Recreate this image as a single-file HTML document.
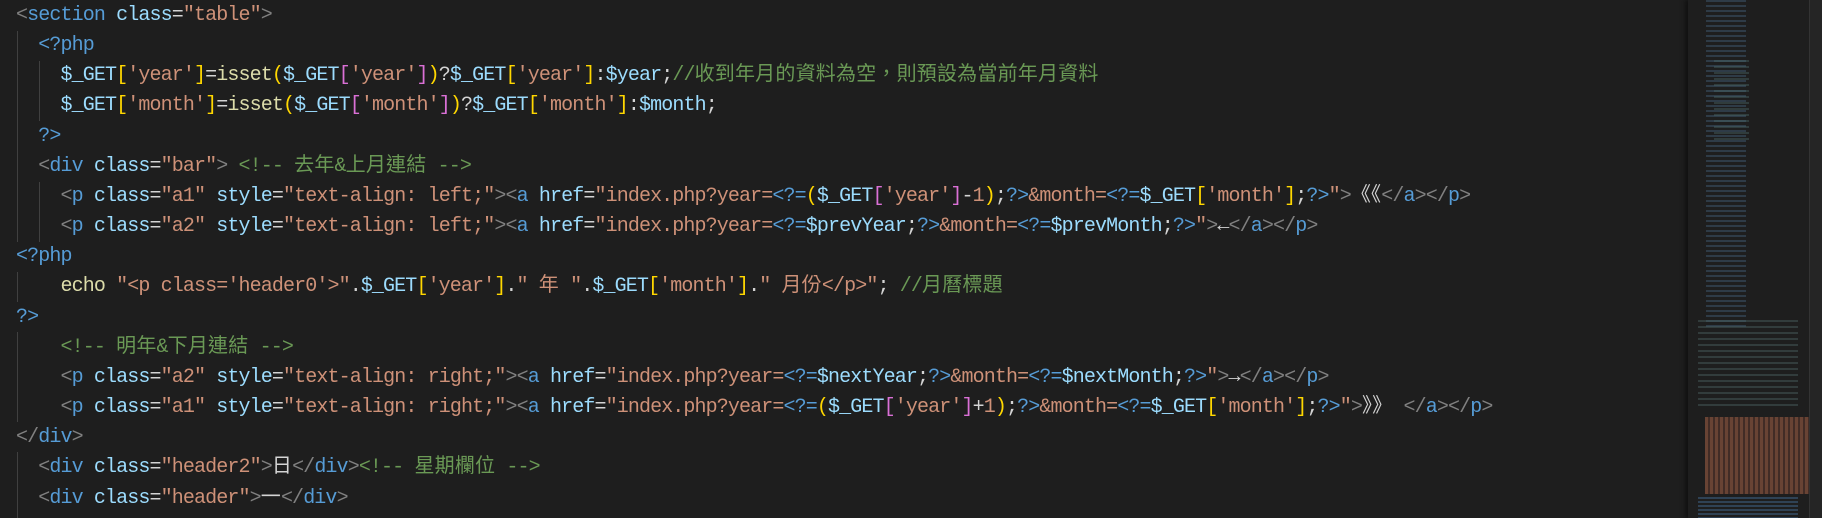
<!DOCTYPE html>
<html><head><meta charset="utf-8"><style>
html,body{margin:0;padding:0;background:#1e1e1e;width:1822px;height:518px;overflow:hidden;position:relative}
pre{position:absolute;left:16px;top:1px;margin:0;font-family:"Liberation Mono","Noto Sans CJK TC",monospace;font-size:20px;letter-spacing:-0.88px;line-height:30.15px;color:#d4d4d4;white-space:pre}
.g{color:#808080}.t{color:#569cd6}.a{color:#9cdcfe}.s{color:#ce9178}.v{color:#9cdcfe}.y{color:#ffd700}.p{color:#da70d6}.f{color:#dcdcaa}.c{color:#6a9955}.e{color:#c586c0}
.j{letter-spacing:0.2px;font-family:"Noto Sans CJK TC",sans-serif;line-height:0;font-size:20px}
.ig{position:absolute;width:1px;background:#404040}
#mm{position:absolute;left:1688px;top:0;width:121px;height:518px;background:#1e1e1e;box-shadow:-3px 0 4px #111}
#sb{position:absolute;left:1809px;top:0;width:13px;height:518px;background:#252525;border-left:1px solid #333}
</style></head><body>
<div class="ig" style="left:17px;top:31px;height:211px"></div>
<div class="ig" style="left:39px;top:61px;height:60px"></div>
<div class="ig" style="left:39px;top:182px;height:60px"></div>
<div class="ig" style="left:17px;top:272px;height:30px"></div>
<div class="ig" style="left:17px;top:332px;height:90px"></div>
<div class="ig" style="left:17px;top:452px;height:66px"></div>
<pre><span class="g">&lt;</span><span class="t">section</span> <span class="a">class</span>=<span class="s">"table"</span><span class="g">&gt;</span>
  <span class="t">&lt;?php</span>
    <span class="v">$_GET</span><span class="y">[</span><span class="s">'year'</span><span class="y">]</span>=<span class="f">isset</span><span class="y">(</span><span class="v">$_GET</span><span class="p">[</span><span class="s">'year'</span><span class="p">]</span><span class="y">)</span>?<span class="v">$_GET</span><span class="y">[</span><span class="s">'year'</span><span class="y">]</span>:<span class="v">$year</span>;<span class="c">//<span class="j">收到年月的資料為空，則預設為當前年月資料</span></span>
    <span class="v">$_GET</span><span class="y">[</span><span class="s">'month'</span><span class="y">]</span>=<span class="f">isset</span><span class="y">(</span><span class="v">$_GET</span><span class="p">[</span><span class="s">'month'</span><span class="p">]</span><span class="y">)</span>?<span class="v">$_GET</span><span class="y">[</span><span class="s">'month'</span><span class="y">]</span>:<span class="v">$month</span>;
  <span class="t">?&gt;</span>
  <span class="g">&lt;</span><span class="t">div</span> <span class="a">class</span>=<span class="s">"bar"</span><span class="g">&gt;</span> <span class="c">&lt;!-- <span class="j">去年</span>&amp;<span class="j">上月連結</span> --&gt;</span>
    <span class="g">&lt;</span><span class="t">p</span> <span class="a">class</span>=<span class="s">"a1"</span> <span class="a">style</span>=<span class="s">"text-align: left;"</span><span class="g">&gt;&lt;</span><span class="t">a</span> <span class="a">href</span>=<span class="s">"index.php?year=</span><span class="t">&lt;?=</span><span class="y">(</span><span class="v">$_GET</span><span class="p">[</span><span class="s">'year'</span><span class="p">]</span>-<span class="s">1</span><span class="y">)</span>;<span class="t">?&gt;</span><span class="s">&amp;month=</span><span class="t">&lt;?=</span><span class="v">$_GET</span><span class="y">[</span><span class="s">'month'</span><span class="y">]</span>;<span class="t">?&gt;</span><span class="s">"</span><span class="g">&gt;</span><span class="j">《《</span><span class="g">&lt;/</span><span class="t">a</span><span class="g">&gt;&lt;/</span><span class="t">p</span><span class="g">&gt;</span>
    <span class="g">&lt;</span><span class="t">p</span> <span class="a">class</span>=<span class="s">"a2"</span> <span class="a">style</span>=<span class="s">"text-align: left;"</span><span class="g">&gt;&lt;</span><span class="t">a</span> <span class="a">href</span>=<span class="s">"index.php?year=</span><span class="t">&lt;?=</span><span class="v">$prevYear</span>;<span class="t">?&gt;</span><span class="s">&amp;month=</span><span class="t">&lt;?=</span><span class="v">$prevMonth</span>;<span class="t">?&gt;</span><span class="s">"</span><span class="g">&gt;</span>←<span class="g">&lt;/</span><span class="t">a</span><span class="g">&gt;&lt;/</span><span class="t">p</span><span class="g">&gt;</span>
<span class="t">&lt;?php</span>
    <span class="f">echo</span> <span class="s">"&lt;p class='header0'&gt;"</span>.<span class="v">$_GET</span><span class="y">[</span><span class="s">'year'</span><span class="y">]</span>.<span class="s">" <span class="j">年</span> "</span>.<span class="v">$_GET</span><span class="y">[</span><span class="s">'month'</span><span class="y">]</span>.<span class="s">" <span class="j">月份</span>&lt;/p&gt;"</span>; <span class="c">//<span class="j">月曆標題</span></span>
<span class="t">?&gt;</span>
    <span class="c">&lt;!-- <span class="j">明年</span>&amp;<span class="j">下月連結</span> --&gt;</span>
    <span class="g">&lt;</span><span class="t">p</span> <span class="a">class</span>=<span class="s">"a2"</span> <span class="a">style</span>=<span class="s">"text-align: right;"</span><span class="g">&gt;&lt;</span><span class="t">a</span> <span class="a">href</span>=<span class="s">"index.php?year=</span><span class="t">&lt;?=</span><span class="v">$nextYear</span>;<span class="t">?&gt;</span><span class="s">&amp;month=</span><span class="t">&lt;?=</span><span class="v">$nextMonth</span>;<span class="t">?&gt;</span><span class="s">"</span><span class="g">&gt;</span>→<span class="g">&lt;/</span><span class="t">a</span><span class="g">&gt;&lt;/</span><span class="t">p</span><span class="g">&gt;</span>
    <span class="g">&lt;</span><span class="t">p</span> <span class="a">class</span>=<span class="s">"a1"</span> <span class="a">style</span>=<span class="s">"text-align: right;"</span><span class="g">&gt;&lt;</span><span class="t">a</span> <span class="a">href</span>=<span class="s">"index.php?year=</span><span class="t">&lt;?=</span><span class="y">(</span><span class="v">$_GET</span><span class="p">[</span><span class="s">'year'</span><span class="p">]</span>+<span class="s">1</span><span class="y">)</span>;<span class="t">?&gt;</span><span class="s">&amp;month=</span><span class="t">&lt;?=</span><span class="v">$_GET</span><span class="y">[</span><span class="s">'month'</span><span class="y">]</span>;<span class="t">?&gt;</span><span class="s">"</span><span class="g">&gt;</span><span class="j">》》</span> <span class="g">&lt;/</span><span class="t">a</span><span class="g">&gt;&lt;/</span><span class="t">p</span><span class="g">&gt;</span>
<span class="g">&lt;/</span><span class="t">div</span><span class="g">&gt;</span>
  <span class="g">&lt;</span><span class="t">div</span> <span class="a">class</span>=<span class="s">"header2"</span><span class="g">&gt;</span><span class="j">日</span><span class="g">&lt;/</span><span class="t">div</span><span class="g">&gt;</span><span class="c">&lt;!-- <span class="j">星期欄位</span> --&gt;</span>
  <span class="g">&lt;</span><span class="t">div</span> <span class="a">class</span>=<span class="s">"header"</span><span class="g">&gt;</span><span class="j">一</span><span class="g">&lt;/</span><span class="t">div</span><span class="g">&gt;</span>
  <span class="g">&lt;</span><span class="t">div</span> <span class="a">class</span>=<span class="s">"header"</span><span class="g">&gt;</span><span class="j">二</span><span class="g">&lt;/</span><span class="t">div</span><span class="g">&gt;</span></pre>
<div id="mm">
<div style="position:absolute;left:18px;top:0;width:40px;height:330px;background:repeating-linear-gradient(#3f5870 0 2px,transparent 2px 5px);opacity:.5"></div>
<div style="position:absolute;left:26px;top:60px;width:35px;height:80px;background:repeating-linear-gradient(#4a6a6a 0 2px,transparent 2px 6px);opacity:.4"></div>
<div style="position:absolute;left:10px;top:320px;width:100px;height:90px;background:repeating-linear-gradient(#4a6060 0 2px,transparent 2px 6px);opacity:.45"></div>
<div style="position:absolute;left:17px;top:417px;width:104px;height:77px;background:repeating-linear-gradient(90deg,#7a4c3a 0 3px,#4a3028 3px 5px);opacity:.8"></div>
<div style="position:absolute;left:10px;top:497px;width:100px;height:21px;background:repeating-linear-gradient(#3a5a7a 0 2px,transparent 2px 4px);opacity:.6"></div>
</div>
<div id="sb"></div>
</body></html>
